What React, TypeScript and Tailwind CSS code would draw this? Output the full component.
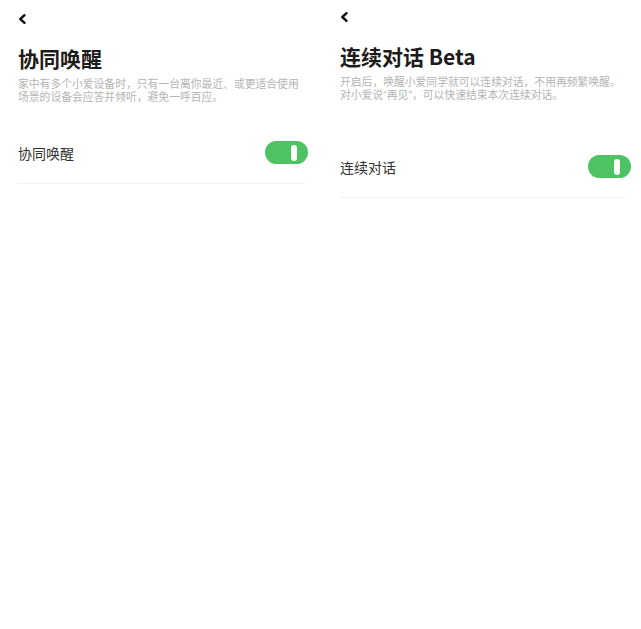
const cjk = "font-['Noto_Sans_CJK_SC','Noto_Sans',sans-serif]";
const descFont = "font-['Liberation_Sans','Noto_Sans_CJK_SC',sans-serif]";

function BackIcon() {
  return (
    <svg width="9" height="10" viewBox="0 0 9 10" fill="none">
      <path d="M6.5 1.2 L2.3 5 L6.5 8.8" stroke="#111" strokeWidth="2.4" strokeLinecap="round" strokeLinejoin="round" />
    </svg>
  );
}

function Toggle() {
  return (
    <div className="flex h-[23px] w-[43px] items-center justify-end rounded-full bg-[#4fc264] pr-[11px]">
      <div className="h-[16px] w-[6px] rounded-full bg-white" />
    </div>
  );
}

type Panel = {
  title: string;
  desc: string[];
  label: string;
  pad: string;
  backTop: string;
  titleTop: string;
  descTop: string;
  rowTop: string;
  rowPad: string;
  lineTop: string;
  lineRight: string;
};

const panels: Panel[] = [
  {
    title: "协同唤醒",
    desc: ["家中有多个小爱设备时，只有一台离你最近、或更适合使用", "场景的设备会应答并倾听，避免一呼百应。"],
    label: "协同唤醒",
    pad: "pl-[18px]",
    backTop: "pt-[14px]",
    titleTop: "mt-[22px]",
    descTop: "mt-[8px]",
    rowTop: "mt-[38px]",
    rowPad: "pr-[12px]",
    lineTop: "mt-[19px]",
    lineRight: "mr-[15px]",
  },
  {
    title: "连续对话 Beta",
    desc: ["开启后，唤醒小爱同学就可以连续对话，不用再频繁唤醒。", "对小爱说“再见”，可以快速结束本次连续对话。"],
    label: "连续对话",
    pad: "pl-[20px]",
    backTop: "pt-[12px]",
    titleTop: "mt-[22px]",
    descTop: "mt-[8px]",
    rowTop: "mt-[54px]",
    rowPad: "pr-[9px]",
    lineTop: "mt-[19px]",
    lineRight: "mr-[14px]",
  },
];

export default function App() {
  return (
    <div className={`flex h-[629px] w-[641px] bg-white ${cjk}`}>
      {panels.map((p) => (
        <div key={p.title} className={`w-[320px] flex-none ${p.pad} ${p.backTop}`}>
          <BackIcon />
          <h1 className={`${p.titleTop} text-[21px] font-bold leading-[24px] text-[#1c1c1c]`}>{p.title}</h1>
          <div className={`${p.descTop} ${descFont} text-[10.8px] leading-[12.5px] text-[#b4b4b4]`}>
            {p.desc.map((line) => (
              <p key={line} className="whitespace-nowrap">{line}</p>
            ))}
          </div>
          <div className={`${p.rowTop} flex items-center justify-between ${p.rowPad}`}>
            <span className="text-[14px] leading-[20px] text-[#333]">{p.label}</span>
            <Toggle />
          </div>
          <div className={`${p.lineTop} ${p.lineRight} h-px bg-[#f0f0f0]`} />
        </div>
      ))}
    </div>
  );
}
